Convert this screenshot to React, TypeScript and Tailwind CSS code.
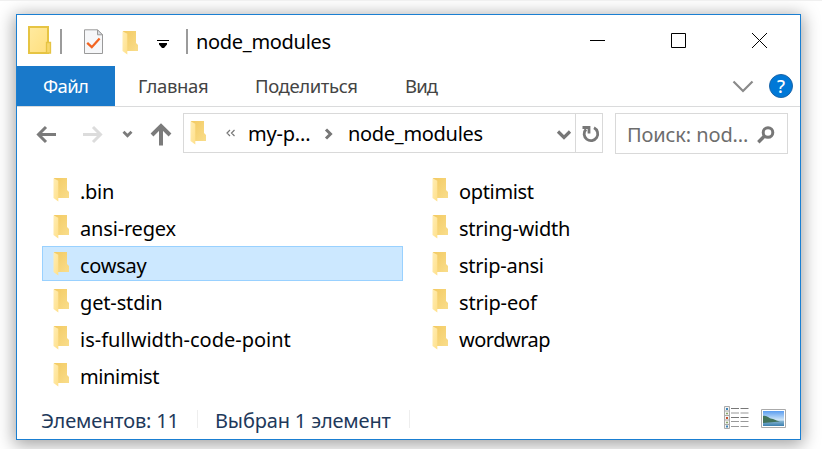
import React from "react";

const leftItems = [
  { name: ".bin", tracking: "tracking-[-0.3px]" },
  { name: "ansi-regex", tracking: "tracking-[-0.17px]" },
  { name: "cowsay", tracking: "tracking-[-0.25px]" },
  { name: "get-stdin", tracking: "tracking-[-0.15px]" },
  { name: "is-fullwidth-code-point", tracking: "tracking-[0px]" },
  { name: "minimist", tracking: "tracking-[-0.37px]" },
];
const rightItems = [
  { name: "optimist", tracking: "tracking-[-0.35px]" },
  { name: "string-width", tracking: "tracking-[-0.25px]" },
  { name: "strip-ansi", tracking: "tracking-[-0.25px]" },
  { name: "strip-eof", tracking: "tracking-[-0.18px]" },
  { name: "wordwrap", tracking: "tracking-[-0.5px]" },
];

function Folder({ className = "" }: { className?: string }) {
  return (
    <svg className={`shrink-0 ${className}`} width="17" height="25" viewBox="0 0 17 25">
      <defs>
        <linearGradient id="back" x1="0" y1="0" x2="1" y2="1">
          <stop offset="0" stopColor="#f3ca62" />
          <stop offset="1" stopColor="#f9dd8b" />
        </linearGradient>
        <linearGradient id="flap" x1="0" y1="0" x2="1" y2="1">
          <stop offset="0" stopColor="#ffedb5" />
          <stop offset="1" stopColor="#ffe08a" />
        </linearGradient>
      </defs>
      <path d="M1 1H14V13L16 15V21H4z" fill="url(#back)" />
      <path d="M0.5 1.3L5.3 3.7V24.5L0.5 21z" fill="url(#flap)" />
    </svg>
  );
}

function Row({ name, tracking, selected }: { name: string; tracking: string; selected?: boolean }) {
  return (
    <div
      className={`flex h-[35px] items-start border pl-[10px] ${
        selected ? "border-[#99d1ff] bg-[#cce8ff]" : "border-transparent"
      }`}
    >
      <Folder className="mt-[4px]" />
      <span className={`mt-[5px] ml-[10px] text-[20px] leading-[28px] whitespace-nowrap text-black ${tracking}`}>{name}</span>
    </div>
  );
}

export default function App() {
  return (
    <div className="h-[449px] w-[822px] overflow-hidden border-t border-[#f0f0f0] bg-white pt-[13px] pl-4 font-['Noto_Sans','Open_Sans',sans-serif]">
      <div className="flex h-[426px] w-[785px] flex-col border border-[#1a7fd2] bg-white shadow-[0_3px_16px_2px_rgba(0,0,0,0.36)]">
        <header className="flex h-[51px] shrink-0 items-start">
          <svg className="mt-[11px] ml-[11px]" width="24" height="29" viewBox="0 0 24 29">
            <defs>
              <linearGradient id="app" x1="0" y1="0" x2="1" y2="1">
                <stop offset="0" stopColor="#ffeaa0" />
                <stop offset="1" stopColor="#ffdf7d" />
              </linearGradient>
            </defs>
            <path d="M1 1H20V27H1z" fill="url(#app)" stroke="#e6c443" strokeWidth="2" />
            <path d="M18.5 16.5H22.5V27H18.5z" fill="#f7d76c" stroke="#e6c443" strokeWidth="1.3" />
          </svg>
          <i className="mt-[14px] ml-[8px] h-[25px] w-[2px] bg-[#9b9b9b]" />
          <svg className="mt-[14px] ml-[22px]" width="20" height="26" viewBox="0 0 20 26">
            <path d="M0.5 0.8H13.5L18.5 5.8V24.5H0.5z" fill="#f6f7f9" stroke="#9a9a9a" />
            <path d="M13.5 0.8V5.8H18.5z" fill="#dadde2" stroke="#9a9a9a" />
            <path d="M3.2 13.8L7.8 18.2L15.6 9.5" fill="none" stroke="#f26522" strokeWidth="2.3" />
          </svg>
          <Folder className="mt-[15px] ml-[18px]" />
          <svg className="mt-[24px] ml-[18px]" width="13" height="10" viewBox="0 0 13 10">
            <path d="M0 1H12V2H0zM2 4H10V5.500L7 9H5L2 5.500z" fill="#000" />
          </svg>
          <i className="mt-[14px] ml-[16px] h-[25px] w-[2px] bg-[#9b9b9b]" />
          <h1 className="mt-[13px] ml-[8px] w-[180px] text-[20px] leading-[28px] font-normal tracking-[-0.3px] text-black">node_modules</h1>
          <svg className="mt-[17px] ml-[213px]" width="179" height="17" viewBox="0 0 179 17" fill="none" stroke="#000">
            <path d="M1 8.5H16" />
            <path d="M82.5 1.5H96.5V15.5H82.5z" />
            <path d="M163 1L178 16M178 1L163 16" />
          </svg>
        </header>

        <nav className="flex h-[41px] shrink-0 items-start border-b border-[#dadbdc] text-[18.5px] leading-[40px] text-[#444]">
          <div className="h-[40px] w-[98px] bg-[#1979ca] pl-[26px] tracking-[-0.6px] text-white">Файл</div>
          <div className="w-[117px] pl-[23px] tracking-[-0.35px]">Главная</div>
          <div className="w-[150px] pl-[23px] tracking-[-0.38px]">Поделиться</div>
          <div className="w-[350px] pl-[23px] tracking-[-0.9px]">Вид</div>
          <svg className="mt-[14px]" width="22" height="13" viewBox="0 0 22 13">
            <path d="M1.5 1.5L11 11L20.5 1.5" fill="none" stroke="#8a8a8a" strokeWidth="2.2" />
          </svg>
          <div className="mt-[8px] ml-[15px] h-6 w-6 rounded-full border border-[#1c65a8] bg-[#0078d7] text-center text-[18px] leading-[22px] font-medium text-white">?</div>
        </nav>

        <div className="flex h-[58px] shrink-0 items-start pt-[6px]">
          <svg className="mt-[9px] ml-[19px]" width="136" height="24" viewBox="0 0 136 24" fill="none">
            <path d="M20 12.5H3M10 5L2.5 12.5L10 20" stroke="#7b7b7b" strokeWidth="3" />
            <path d="M47 12.5H64M57 5L64.500 12.5L57 20" stroke="#dcdcdc" strokeWidth="3" />
            <path d="M87.500 9.800L91.500 13.800L95.500 9.800" stroke="#7b7b7b" strokeWidth="2.8" />
            <path d="M125 23.500V4M116 13L125 4L134 13" stroke="#7b7b7b" strokeWidth="4" />
          </svg>
          <div className="ml-[11px] flex h-[40px] w-[420px] items-start border border-[#d9d9d9]">
            <Folder className="mt-[6px] ml-[6px]" />
            <svg className="mt-[15px] ml-[19px]" width="10" height="8" viewBox="0 0 10 8" fill="none" stroke="#777" strokeWidth="1.2">
              <path d="M4 1L1 4L4 7M8.500 1L5.500 4L8.500 7" />
            </svg>
            <span className="mt-[6px] ml-[12px] w-[76px] text-[20px] leading-[28px] tracking-[-0.2px]">my-p...</span>
            <svg className="mt-[14px]" width="10" height="12" viewBox="0 0 10 12">
              <path d="M2 1.500L6.500 6L2 10.500" fill="none" stroke="#777" strokeWidth="3" />
            </svg>
            <span className="mt-[6px] ml-[14px] w-[208px] text-[20px] leading-[28px] tracking-[-0.3px]">node_modules</span>
            <svg className="mt-[15px]" width="16" height="12" viewBox="0 0 16 12">
              <path d="M2 2.500L8 8.500L14 2.500" fill="none" stroke="#777" strokeWidth="3.200" />
            </svg>
            <div className="ml-[3px] h-[38px] border-l border-[#d9d9d9] pt-[11px] pl-[6px]">
              <svg width="18" height="18" viewBox="0 0 18 18" fill="none" stroke="#777" strokeWidth="2.8">
                <path d="M12 2.800A6.800 6.800 0 1 1 4 4.200M0.500 2.500H7V8.500" />
              </svg>
            </div>
          </div>
          <div className="ml-[12px] flex h-[41px] w-[173px] items-start border border-[#d9d9d9]">
            <span className="mt-[7px] ml-[11px] w-[130px] text-[20px] leading-[28px] tracking-[-0.12px] whitespace-nowrap text-[#6d6d6d]">Поиск: nod...</span>
            <svg className="mt-[12px]" width="18" height="18" viewBox="0 0 18 18" fill="none" stroke="#777">
              <circle cx="11" cy="6.500" r="4.800" strokeWidth="3" />
              <path d="M7.500 10L1.300 16.200" strokeWidth="3.400" />
            </svg>
          </div>
        </div>

        <main className="flex h-[235px] shrink-0 pt-[7px] pl-[25px]">
          <div className="flex w-[361px] flex-col gap-[2px]">
            {leftItems.map((i) => (
              <Row key={i.name} {...i} selected={i.name === "cowsay"} />
            ))}
          </div>
          <div className="ml-[18px] flex w-[361px] flex-col gap-[2px]">
            {rightItems.map((i) => (
              <Row key={i.name} {...i} />
            ))}
          </div>
        </main>

        <footer className="flex h-[39px] items-start text-[20px] leading-[28px] whitespace-nowrap text-[#1e395b]">
          <span className="mt-[7px] ml-[24px] w-[156px] tracking-[-0.15px]">Элементов: 11</span>
          <i className="mt-[10px] h-[18px] w-px bg-[#eee]" />
          <span className="mt-[7px] ml-[17px] w-[194px] tracking-[-0.15px]">Выбран 1 элемент</span>
          <i className="mt-[10px] h-[18px] w-px bg-[#eee]" />
          <svg className="mt-[6px] ml-[314px]" width="25" height="24" viewBox="0 0 25 24">
            <path d="M0.500 0.500H5.500V22.500H0.500z" fill="#f3f3f3" stroke="#aaa" />
            <path d="M0 5H6M0 9.500H6M0 14H6M0 18.500H6" stroke="#aaa" />
            <path d="M2 3H4M2 20.500H4" stroke="#3f86b8" strokeWidth="2" />
            <path d="M2 12H4" stroke="#c8502f" strokeWidth="2" />
            <path d="M2 7.500H4M2 16.500H4" stroke="#8aa86a" strokeWidth="1.500" />
            <path d="M7 2.500H15M16.500 2.500H24.500M7 11.500H15M16.500 11.500H24.500" stroke="#777" />
            <path d="M7 7H15M16.500 7H24.500M7 15.500H15M16.500 15.500H24.500M7 20.500H15M16.500 20.500H24.500" stroke="#999" />
          </svg>
          <svg className="mt-[9px] ml-[12px]" width="25" height="19" viewBox="0 0 25 19">
            <defs>
              <linearGradient id="sky" x1="0" y1="0" x2="0" y2="1">
                <stop offset="0" stopColor="#5b9df0" />
                <stop offset="0.600" stopColor="#cfe6f8" />
                <stop offset="0.700" stopColor="#7fb0d0" />
                <stop offset="1" stopColor="#3b7fae" />
              </linearGradient>
            </defs>
            <path d="M0.500 0.500H24.500V18.500H0.500z" fill="#fff" stroke="#aaa" />
            <path d="M2 2H23V17H2z" fill="url(#sky)" />
            <path d="M2 7C6 6 8 10 12 10C15 11 16 12 19 12.500L2 14z" fill="#41725a" />
          </svg>
        </footer>
      </div>
    </div>
  );
}
